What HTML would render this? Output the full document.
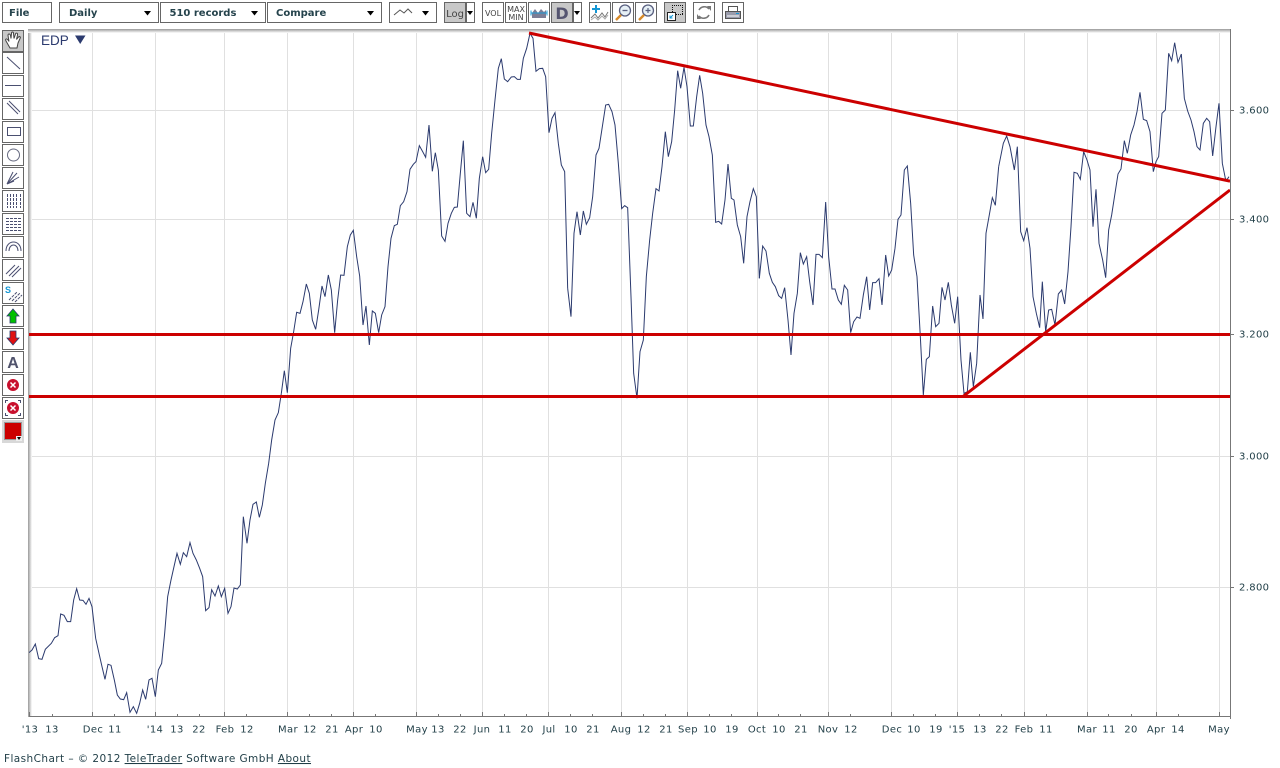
<!DOCTYPE html>
<html>
<head>
<meta charset="utf-8">
<title>FlashChart</title>
<style>
html,body{margin:0;padding:0;background:#fff;width:1280px;height:768px;overflow:hidden}
svg{position:absolute;left:0;top:0;display:block}
.t{font-family:"DejaVu Sans",sans-serif;font-size:10px;fill:#1f3d46;letter-spacing:.35px}
.f{font-family:"DejaVu Sans",sans-serif;font-size:10.5px;fill:#1f3d46;letter-spacing:.42px}
.b{font-family:"DejaVu Sans",sans-serif;font-size:10px;font-weight:bold;fill:#25434c}
.box{fill:#fff;stroke:#666;stroke-width:1}
.g{fill:#c8c8c8;stroke:#666;stroke-width:1}
.p{fill:none;stroke:#2b3a6e;stroke-width:1;vector-effect:non-scaling-stroke}
.ic{fill:none;stroke:#4a4f70;stroke-width:1}
</style>
</head>
<body>
<svg width="1280" height="768" viewBox="0 0 1280 768" xmlns="http://www.w3.org/2000/svg">
<defs>
<linearGradient id="sl" x1="0" x2="1" y1="0" y2="0"><stop offset="0" stop-color="#999"/><stop offset="1" stop-color="#fff"/></linearGradient>
<linearGradient id="st" x1="0" x2="0" y1="0" y2="1"><stop offset="0" stop-color="#999"/><stop offset="1" stop-color="#fff"/></linearGradient>
<clipPath id="chart"><rect x="29" y="30" width="1201" height="686"/></clipPath>
</defs>

<!-- top toolbar -->
<rect class="box" x="2.5" y="2.5" width="49" height="20"/>
<text class="b" x="9" y="16">File</text>
<rect class="box" x="59.5" y="2.5" width="99" height="20"/>
<text class="b" x="69" y="16">Daily</text>
<polygon points="144,11 151,11 147.5,15.5" fill="#000"/>
<rect class="box" x="160.5" y="2.5" width="105" height="20"/>
<text class="b" x="169.500" y="16">510 records</text>
<polygon points="251,11 258,11 254.5,15.5" fill="#000"/>
<rect class="box" x="267.5" y="2.5" width="114" height="20"/>
<text class="b" x="276" y="16">Compare</text>
<polygon points="367,11 374,11 370.5,15.5" fill="#000"/>
<rect class="box" x="389.5" y="2.5" width="47" height="20"/>
<polyline points="394,15 400,10 404,13 408,9 412,13" fill="none" stroke="#555" stroke-width="1"/>
<polygon points="422,11 429,11 425.5,15.5" fill="#000"/>

<rect class="g" x="444.5" y="2.5" width="21" height="20"/>
<text x="455" y="17" text-anchor="middle" font-family="'DejaVu Sans',sans-serif" font-size="10" fill="#444">Log</text>
<rect class="box" x="466.5" y="2.5" width="8" height="20"/>
<polygon points="467,11 473,11 470,15" fill="#000"/>
<rect class="box" x="482.5" y="2.5" width="21" height="20"/>
<text x="493" y="16" text-anchor="middle" font-family="'DejaVu Sans',sans-serif" font-size="8" fill="#444">VOL</text>
<rect class="box" x="505.5" y="2.5" width="21" height="20"/>
<text x="516" y="12" text-anchor="middle" font-family="'DejaVu Sans',sans-serif" font-size="8" fill="#444">MAX</text>
<text x="516" y="20" text-anchor="middle" font-family="'DejaVu Sans',sans-serif" font-size="8" fill="#444">MIN</text>
<rect class="box" x="528.5" y="2.5" width="21" height="20"/>
<polygon points="532,18 532,13 535,9 538,13 541,9 544,12 546,10 546,18" fill="#7c7e96"/>
<path d="M531,13H547M531,10.5V15.5M547,10.5V15.5" stroke="#1c9bd6" stroke-width="1" fill="none"/>
<rect class="g" x="551.5" y="2.5" width="21" height="20"/>
<text x="562" y="19" text-anchor="middle" font-family="'DejaVu Sans',sans-serif" font-weight="bold" font-size="16" fill="#555570">D</text>
<rect class="box" x="573.5" y="2.5" width="8" height="20"/>
<polygon points="574,11 580,11 577,15" fill="#000"/>

<rect class="box" x="589.5" y="2.5" width="21" height="20"/>
<path d="M592,9H600M596,5V13" stroke="#1396d4" stroke-width="2" fill="none"/>
<polyline points="591,18 595,14 598,18 602,13 605,17 608,12" fill="none" stroke="#777" stroke-width="1"/>
<polyline points="591,20 595,17 598,20 602,16 605,19 608,15" fill="none" stroke="#aaa" stroke-width="1"/>
<rect class="box" x="612.5" y="2.5" width="21" height="20"/>
<circle cx="625" cy="10.5" r="5.5" fill="#e6f0f6" stroke="#5a6080" stroke-width="1.3"/>
<path d="M622.5,10.5H627.5" stroke="#5a6080" stroke-width="1.3"/>
<path d="M621,15L616,20" stroke="#d68a2a" stroke-width="2.4"/>
<rect class="box" x="635.5" y="2.5" width="21" height="20"/>
<circle cx="648" cy="10.5" r="5.5" fill="#e6f0f6" stroke="#5a6080" stroke-width="1.3"/>
<path d="M645.5,10.5H650.5M648,8V13" stroke="#5a6080" stroke-width="1.2"/>
<path d="M644,15L639,20" stroke="#d68a2a" stroke-width="2.4"/>

<rect class="g" x="664.5" y="2.5" width="21" height="20"/>
<path d="M672,5.500H683M682.500,5V15M672.500,5V12M676,14.500H683" fill="none" stroke="#111" stroke-dasharray="1 1" shape-rendering="crispEdges"/>
<rect x="667.5" y="12.5" width="8" height="8" fill="#fff" stroke="#222" shape-rendering="crispEdges"/>
<path d="M673,15L670,18M670,15.5V18H672.5" stroke="#1396d4" stroke-width="1" fill="none"/>
<rect class="box" x="693.5" y="2.5" width="21" height="20"/>
<path d="M699,10A6,6 0 0 1 709,9M709,15A6,6 0 0 1 699,16" fill="none" stroke="#777" stroke-width="1.6"/>
<polygon points="707,6 711,6 711,11" fill="#777"/>
<polygon points="701,19 697,19 697,14" fill="#777"/>
<rect class="box" x="722.5" y="2.5" width="21" height="20"/>
<rect x="728.5" y="6.5" width="9" height="5" fill="#fff" stroke="#555"/>
<rect x="725.5" y="11.5" width="15" height="7" fill="#9a9cac" stroke="#555"/>
<path d="M727,16H739" stroke="#fff"/>
<rect x="736" y="13" width="3" height="1" fill="#1396d4"/>

<!-- chart frame shading -->
<rect x="28" y="29" width="4" height="688" fill="url(#sl)"/>
<rect x="28" y="29" width="1203" height="4" fill="url(#st)"/>

<!-- grid -->
<g stroke="#e0e0e0" stroke-width="1" shape-rendering="crispEdges">
<path d="M32,110.5H1230M32,219.5H1230M32,334.5H1230M32,456.5H1230M32,587.5H1230"/>
<path d="M92.5,33V716M155.5,33V716M224.5,33V716M287.5,33V716M353.5,33V716M416.5,33V716M482.5,33V716M548.5,33V716M621.5,33V716M687.5,33V716M757.5,33V716M828.5,33V716M891.5,33V716M957.5,33V716M1024.5,33V716M1087.5,33V716M1156.5,33V716M1219.5,33V716"/>
</g>

<!-- price line -->
<g clip-path="url(#chart)">
<polyline class="p" transform="translate(28,380) scale(.33333)" points="3,818 12,810 22,792 32,836 42,838 52,808 70,790 80,773 90,767 98,702 108,706 118,725 128,725 137,660 146,626 155,660 165,661 174,673 183,655 192,680 203,775 213,820 222,860 231,898 240,853 249,856 259,900 268,945 277,957 287,959 296,938 306,997 316,980 326,1000 335,970 344,930 353,958 363,900 372,895 382,950 391,870 401,850 410,760 419,650 429,600 438,560 447,520 457,553 466,518 476,530 486,488 495,520 505,540 515,565 524,590 533,692 543,683 551,629 561,648 571,618 580,650 590,625 600,700 609,680 618,624 628,627 637,615 646,410 657,490 666,420 675,373 685,366 694,412 703,375 712,310 722,250 731,180 741,120 751,98 760,40"/>
<polyline class="p" transform="translate(270,30) scale(.33333)" points="34,1090 43,1022 52,1088 62,955 71,905 80,847 90,850 99,815 109,762 118,790 127,870 137,898 146,840 156,768 165,800 175,735 184,780 194,908 203,810 212,735 222,736 232,650 241,615 250,601 260,680 269,738 279,885 288,828 298,945 307,843 316,850 326,908 335,855 345,830 354,710 363,625 373,587 382,583 391,527 401,515 411,485 420,418 430,403 438,395 448,347 458,365 467,382 477,285 487,424 496,368 505,420 515,618 525,634 534,580 544,550 553,532 562,531 571,430 580,332 590,550 600,560 609,517 619,565 628,445 638,380 647,428 656,418 665,310 675,210 685,115 694,86 703,147 713,155 724,141 733,140 742,148 751,148 760,85 770,55 780,10 789,25 798,124 808,116 818,115 827,140 837,308 846,265 855,248 865,340 874,405 884,425 893,775"/>
<polyline class="p" transform="translate(520,30) scale(.33333)" points="143,775 153,860 162,610 171,545 181,615 190,543 199,583 209,563 218,500 228,375 237,355 247,290 257,225 266,223 276,245 285,285 295,400 305,536 314,527 323,533 333,800 341,1030 351,1105 360,965 370,930 379,740 389,630 398,550 408,476 417,483 426,410 436,305 445,380 455,335 464,240 473,122 482,175 492,112 501,170 511,288 520,288 530,200 539,136 548,190 558,285 567,320 577,375 587,577 596,574 605,582 615,510 624,402 634,505 642,510 652,585 662,620 671,700 681,560 690,515 700,476 709,500 718,745"/>
<polyline class="p" transform="translate(760,130) scale(.33333)" points="-2,445 8,348 18,363 28,430 37,457 46,470 56,497 65,505 74,473 84,570 93,675 102,550 112,490 121,368 130,402 140,380 149,455 159,525 168,373 177,373 187,383 197,216 206,380 216,477 225,477 235,510 244,523 253,466 263,480 272,608 281,575 291,561 300,565 310,495 320,440 329,540 338,458 347,458 357,446 366,525 377,375 386,438 395,420 405,355 414,268 423,255 433,120 442,108 452,220 461,375 471,440 481,620 490,795 499,688 508,680 518,528 527,590 537,580 546,472 555,510 565,457 574,525 584,580 593,500 603,690 612,790 622,785 631,667 640,770 650,700 660,495 669,567 678,310 687,260 697,203 706,226 716,110"/>
<polyline class="p" transform="translate(1000,30) scale(.33333)" points="-4,410 10,340 20,318 30,350 43,420 52,350 62,605 71,632 81,593 90,655 99,800 109,850 119,893 127,755 137,905 146,840 155,838 165,885 175,792 185,780 194,822 204,725 213,590 222,427 232,430 241,448 251,365 261,390 270,420 279,590 288,478 297,640 308,690 317,743 326,600 335,555 345,490 354,432 363,417 373,332 382,370 392,315 402,285 411,245 420,187 430,268 440,272 450,305 460,425 468,395 476,380 486,250 496,240 506,70 515,92 524,38 534,97 544,72 553,205 563,243 573,270 582,305 591,350 600,360 610,280 620,265 629,275 638,378 648,290 657,220 667,400 676,445 680,450 687,440"/>
<!-- drawn trend lines -->
<g stroke="#cc0000" stroke-width="3" fill="none">
<path d="M29,334.5H1230M29,396.5H1230"/>
<path d="M529,33L1230,181.2"/>
<path d="M963,396.5L1230,190"/>
</g>
</g>

<!-- EDP label -->
<text x="41" y="45" font-family="'Liberation Sans',sans-serif" font-size="13.5" fill="#2b3a6e">EDP</text>
<polygon points="75,35.5 85.5,35.5 80.2,44" fill="#2b3a6e"/>

<!-- axes -->
<g stroke="#777" stroke-width="1" fill="none" shape-rendering="crispEdges">
<path d="M29,716.5H1231M1230.5,29V719"/>
<path d="M29.5,712V717M92.5,712V717M155.5,712V717M224.5,712V717M287.5,712V717M353.5,712V717M416.5,712V717M482.5,712V717M548.5,712V717M621.5,712V717M687.5,712V717M757.5,712V717M828.5,712V717M891.5,712V717M957.5,712V717M1024.5,712V717M1087.5,712V717M1156.5,712V717M1219.5,712V717"/>
<path d="M52.5,714V716M114.5,714V716M177.5,714V716M199.5,714V716M246.5,714V716M309.5,714V716M331.5,714V716M375.5,714V716M438.5,714V716M460.5,714V716M504.5,714V716M526.5,714V716M570.5,714V716M592.5,714V716M643.5,714V716M665.5,714V716M709.5,714V716M731.5,714V716M778.5,714V716M800.5,714V716M850.5,714V716M913.5,714V716M935.5,714V716M979.5,714V716M1001.5,714V716M1046.5,714V716M1108.5,714V716M1131.5,714V716M1178.5,714V716"/>
<path d="M1231,110.5H1234M1231,219.5H1234M1231,334.5H1234M1231,456.5H1234M1231,587.5H1234"/>
</g>

<text class="t" x="1239" y="113.500">3.600</text>
<text class="t" x="1239" y="222.500">3.400</text>
<text class="t" x="1239" y="337.500">3.200</text>
<text class="t" x="1239" y="459.500">3.000</text>
<text class="t" x="1239" y="590.500">2.800</text>
<g text-anchor="middle">
<text class="t" x="30" y="732.500">'13</text>
<text class="t" x="52" y="732.500">13</text>
<text class="t" x="93" y="732.500">Dec</text>
<text class="t" x="115" y="732.500">11</text>
<text class="t" x="155" y="732.500">'14</text>
<text class="t" x="177" y="732.500">13</text>
<text class="t" x="199" y="732.500">22</text>
<text class="t" x="225" y="732.500">Feb</text>
<text class="t" x="247" y="732.500">12</text>
<text class="t" x="288" y="732.500">Mar</text>
<text class="t" x="310" y="732.500">12</text>
<text class="t" x="332" y="732.500">21</text>
<text class="t" x="354" y="732.500">Apr</text>
<text class="t" x="376" y="732.500">10</text>
<text class="t" x="417" y="732.500">May</text>
<text class="t" x="438" y="732.500">13</text>
<text class="t" x="460" y="732.500">22</text>
<text class="t" x="482" y="732.500">Jun</text>
<text class="t" x="505" y="732.500">11</text>
<text class="t" x="527" y="732.500">20</text>
<text class="t" x="549" y="732.500">Jul</text>
<text class="t" x="571" y="732.500">10</text>
<text class="t" x="593" y="732.500">21</text>
<text class="t" x="621" y="732.500">Aug</text>
<text class="t" x="644" y="732.500">12</text>
<text class="t" x="666" y="732.500">21</text>
<text class="t" x="688" y="732.500">Sep</text>
<text class="t" x="710" y="732.500">10</text>
<text class="t" x="732" y="732.500">19</text>
<text class="t" x="757" y="732.500">Oct</text>
<text class="t" x="779" y="732.500">10</text>
<text class="t" x="801" y="732.500">21</text>
<text class="t" x="828" y="732.500">Nov</text>
<text class="t" x="851" y="732.500">12</text>
<text class="t" x="892" y="732.500">Dec</text>
<text class="t" x="914" y="732.500">10</text>
<text class="t" x="936" y="732.500">19</text>
<text class="t" x="957" y="732.500">'15</text>
<text class="t" x="980" y="732.500">13</text>
<text class="t" x="1002" y="732.500">22</text>
<text class="t" x="1024" y="732.500">Feb</text>
<text class="t" x="1046" y="732.500">11</text>
<text class="t" x="1087" y="732.500">Mar</text>
<text class="t" x="1109" y="732.500">11</text>
<text class="t" x="1131" y="732.500">20</text>
<text class="t" x="1156" y="732.500">Apr</text>
<text class="t" x="1178" y="732.500">14</text>
<text class="t" x="1219" y="732.500">May</text>
</g>

<!-- footer -->
<text class="f" x="4" y="762">FlashChart – © 2012 <tspan text-decoration="underline">TeleTrader</tspan> Software GmbH <tspan text-decoration="underline">About</tspan></text>

<!-- left toolbar -->
<rect class="g" x="2.5" y="30.5" width="21" height="21"/>
<path d="M10,48L6,41C5,39 6.500,38 8,40L9,41.500L8,35.500C8,33.500 10,33.500 10.500,35.500L11,38.500L11.500,33.500C11.500,31.500 13.500,31.500 13.500,33.500L14,38.500L15.500,34C16,32.500 18,33 17.500,35L16.500,39.500L18.500,37C19.500,36 21,37 20,38.500L18,43L17,48Z" fill="#fff" stroke="#444" stroke-width="1"/>

<rect class="box" x="2.5" y="52.5" width="21" height="21"/>
<path class="ic" d="M7,57L20,69"/>
<rect class="box" x="2.5" y="75.500" width="21" height="21"/>
<path class="ic" d="M5,85.500H21"/>
<rect class="box" x="2.500" y="98.500" width="21" height="21"/>
<path class="ic" d="M7,103L18,114M9,101L20,112"/>
<rect class="box" x="2.500" y="121.500" width="21" height="21"/>
<rect class="ic" x="7.500" y="127.500" width="13" height="8"/>
<rect class="box" x="2.500" y="144.500" width="21" height="21"/>
<circle cx="13.500" cy="155" r="6" fill="none" stroke="#666a80" stroke-width="1"/>
<rect class="box" x="2.500" y="167.500" width="21" height="21"/>
<path class="ic" d="M7,184L13,172M7,184L17,173M7,184L19,177M7,184L14,181"/>
<rect class="box" x="2.500" y="190.500" width="21" height="21"/>
<path class="ic" d="M7.500,194V208M10.500,194V208M13.500,194V208M16.500,194V208M20.500,194V208" stroke-dasharray="3 1" shape-rendering="crispEdges"/>
<rect class="box" x="2.500" y="213.500" width="21" height="21"/>
<path class="ic" d="M6,218.500H21M6,221.500H21M6,224.500H21M6,227.500H21M6,230.500H21" stroke-dasharray="3 1" shape-rendering="crispEdges"/>
<rect class="box" x="2.500" y="236.500" width="21" height="21"/>
<path class="ic" d="M6,251C6,239 21,239 21,251M9,251C9,243 18,243 18,251"/>
<rect class="box" x="2.500" y="259.500" width="21" height="21"/>
<path class="ic" d="M6,274L15,265M9,276L19,266M12,277L21,268"/>
<rect class="box" x="2.500" y="282.500" width="21" height="21"/>
<text x="5" y="293" font-family="'Liberation Sans',sans-serif" font-weight="bold" font-size="9" fill="#1396d4">S</text>
<path class="ic" d="M9,300L17,292M12,301L20,293M15,302L22,295" stroke-dasharray="3 1"/>
<rect class="box" x="2.500" y="305.500" width="21" height="21"/>
<polygon points="13,309 19,316 16,316 16,323 10,323 10,316 7,316" fill="#00c000" stroke="#2b3a6e" stroke-width=".8"/>
<rect class="box" x="2.500" y="328.500" width="21" height="21"/>
<polygon points="13,345 19,338 16,338 16,331 10,331 10,338 7,338" fill="#e01010" stroke="#2b3a6e" stroke-width=".8"/>
<rect class="box" x="2.500" y="351.500" width="21" height="21"/>
<text x="13" y="368" text-anchor="middle" font-family="'Liberation Sans',sans-serif" font-weight="bold" font-size="16" fill="#50536c">A</text>
<rect class="box" x="2.500" y="374.500" width="21" height="21"/>
<circle cx="13" cy="385" r="6" fill="#c8102e"/>
<path d="M10.500,382.500L15.500,387.500M15.500,382.500L10.500,387.500" stroke="#fff" stroke-width="1.500"/>
<rect class="box" x="2.500" y="397.500" width="21" height="21"/>
<circle cx="13" cy="408" r="6" fill="#c8102e"/>
<path d="M10.500,405.500L15.500,410.500M15.500,405.500L10.500,410.500" stroke="#fff" stroke-width="1.500"/>
<path d="M5.500,403V400.500H8M18,400.500H20.500V403M5.500,413V415.500H8M18,415.500H20.500V413" fill="none" stroke="#4a4f70"/>
<rect x="2" y="420" width="22" height="23" fill="#d8d8d8"/>
<rect x="4.500" y="422.500" width="17" height="17" fill="#cc0000" stroke="#999"/>
<rect x="16" y="436" width="6" height="5" fill="#eee"/>
<polygon points="17,437 21,437 19,440" fill="#000"/>
</svg>
</body>
</html>
